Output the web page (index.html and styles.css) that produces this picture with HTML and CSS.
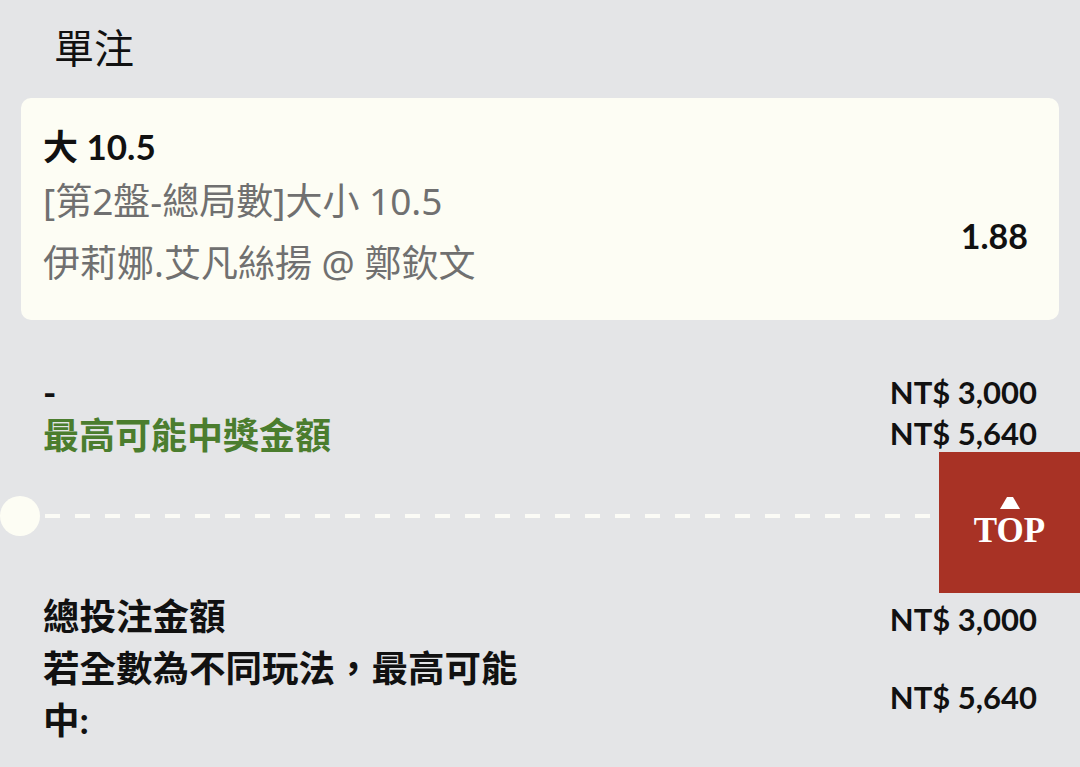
FILE: index.html
```html
<!DOCTYPE html>
<html lang="zh-Hant">
<head>
    <meta charset="UTF-8">
    <meta name="viewport" content="width=device-width, initial-scale=1.0">
    <title>單注</title>
    <link rel="stylesheet" href="styles.css">
</head>
<body>

    <h1 class="titulo">單注</h1>

    <div class="card">
        <div class="card-info">
            <div class="selecao">大 10.5</div>
            <div class="mercado">[第2盤-總局數]大小 10.5</div>
            <div class="mercado">伊莉娜.艾凡絲揚 @ 鄭欽文</div>
        </div>
        <div class="odd">1.88</div>
    </div>

    <div class="resumo">
        <div class="linha">
            <span class="rotulo">-</span>
            <span class="valor">NT$ 3,000</span>
        </div>
        <div class="linha">
            <span class="rotulo verde">最高可能中獎金額</span>
            <span class="valor">NT$ 5,640</span>
        </div>
    </div>

    <div class="divisor">
        <span class="bolinha"></span>
        <span class="tracejado"></span>
    </div>

    <div class="totais">
        <div class="linha">
            <span class="rotulo">總投注金額</span>
            <span class="valor">NT$ 3,000</span>
        </div>
        <div class="linha">
            <span class="rotulo">若全數為不同玩法，最高可能中:</span>
            <span class="valor">NT$ 5,640</span>
        </div>
    </div>

    <a class="topo" href="#">
        <svg class="seta" width="20" height="12" viewBox="0 0 20 12">
            <polygon points="7,0 13,0 20,12 0,12" fill="#fff"/>
        </svg>
        TOP
    </a>

</body>
</html>
```

FILE: styles.css
```css
body {
    margin: 0;
    background: #e4e5e7;
    font-family: Lato, "Noto Sans CJK TC", sans-serif;
    color: #111;
}
.titulo {
    margin: 0;
    padding: 20px 0 0 54px;
    font-size: 40px;
    font-weight: normal;
    line-height: 56px;
    height: 78px;
}
.card {
    margin: 0 21px;
    background: #fdfdf4;
    border-radius: 10px;
    padding: 24px 31px 26px 22px;
    display: flex;
    align-items: center;
    justify-content: space-between;
}
.selecao {
    font-size: 35px;
    font-weight: bold;
    line-height: 48px;
}
.mercado {
    font-family: "Noto Sans", "Noto Sans CJK TC", sans-serif;
    font-size: 37px;
    line-height: 62px;
    color: #707070;
}
.odd {
    font-size: 34px;
    font-weight: bold;
    margin-top: 54px;
}
.resumo {
    margin-top: 51px;
    padding: 0 43px;
}
.linha {
    display: flex;
    justify-content: space-between;
    align-items: center;
}
.resumo .linha {
    height: 41px;
}
.rotulo {
    font-size: 36px;
    font-weight: bold;
}
.verde {
    color: #4b7d2e;
}
.valor {
    font-size: 31px;
    font-weight: bold;
}
.divisor {
    margin-top: 43px;
    display: flex;
    align-items: center;
    height: 40px;
}
.bolinha {
    width: 40px;
    height: 40px;
    border-radius: 50%;
    background: #fdfdf4;
}
.tracejado {
    flex: 1;
    height: 4px;
    margin-left: 5px;
    background: repeating-linear-gradient(90deg, #fbfbf6 0 15px, transparent 15px 30px);
}
.totais {
    margin-top: 54px;
    padding: 0 43px;
}
.totais .rotulo {
    font-size: 36.5px;
    line-height: 52px;
    max-width: 495px;
}
.totais .valor {
    margin-top: 6px;
}
.topo {
    position: absolute;
    top: 452px;
    right: 0;
    width: 141px;
    height: 141px;
    background: #a83225;
    color: #fff;
    text-decoration: none;
    font-family: "Liberation Serif", serif;
    font-weight: bold;
    font-size: 35px;
    line-height: 40px;
    display: flex;
    flex-direction: column;
    align-items: center;
    justify-content: center;
}
.seta {
    margin-top: 2px;
    margin-bottom: 2px;
}
```
